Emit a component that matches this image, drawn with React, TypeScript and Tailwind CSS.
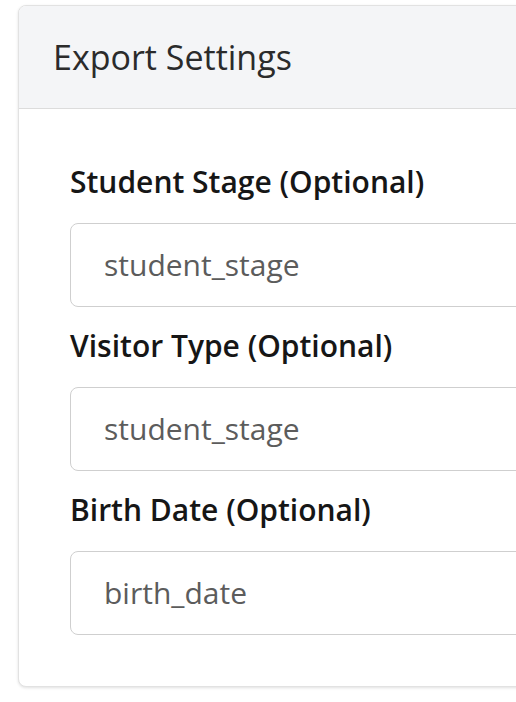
const FIELDS = [
  { label: 'Student Stage (Optional)', value: 'student_stage' },
  { label: 'Visitor Type (Optional)', value: 'student_stage' },
  { label: 'Birth Date (Optional)', value: 'birth_date' },
]

export default function App() {
  return (
    <div
      className="w-[516px] h-[702px] overflow-hidden bg-white pt-[5px] pl-[18px]"
      style={{ fontFamily: '"Open Sans", "Noto Sans", sans-serif' }}
    >
      <div className="w-[560px] rounded-[8px] border border-[#e2e2e2] bg-white shadow-[0_1px_3px_rgba(0,0,0,0.12)] overflow-hidden">
        {/* Header */}
        <div className="h-[103px] flex items-center px-[34px] bg-[#f4f5f7] border-b border-[#dcdcdc]">
          <h2 className="text-[34px] font-normal text-[#2b2b2b] leading-none">Export Settings</h2>
        </div>

        {/* Body */}
        <div className="px-[51px] pt-[53px] pb-[51px] flex flex-col gap-[19px]">
          {FIELDS.map((f, i) => (
            <div key={i} className="flex flex-col gap-[21px]">
              <label className="text-[30px] font-semibold text-[#161616] leading-[40px]">{f.label}</label>
              <div className="h-[84px] rounded-[8px] border border-[#cfcfcf] flex items-center px-[33px]">
                <span className="text-[30px] text-[#5c5c5c] leading-[40px]">{f.value}</span>
              </div>
            </div>
          ))}
        </div>
      </div>
    </div>
  )
}
